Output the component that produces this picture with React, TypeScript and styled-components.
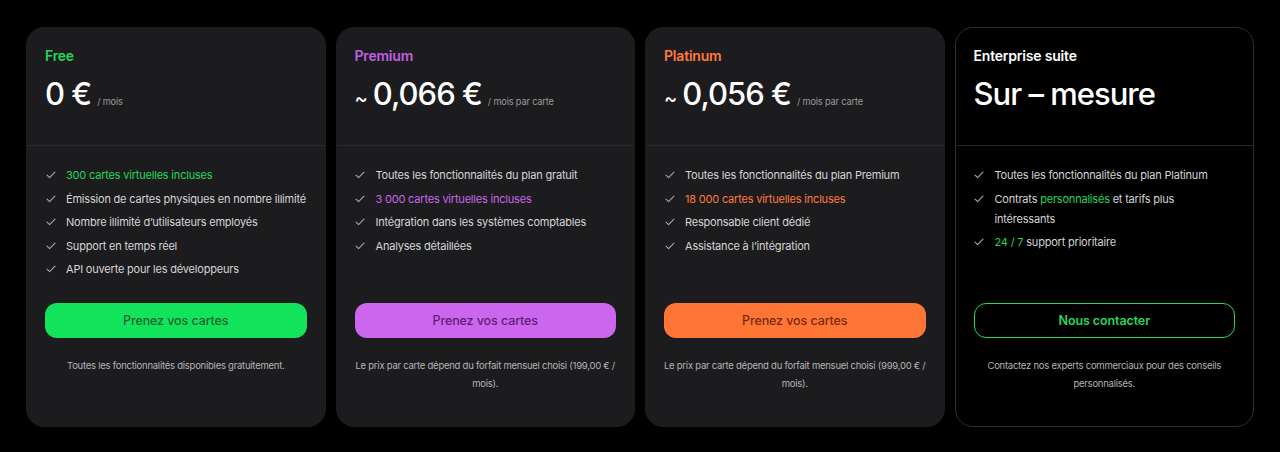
import React from "react";
import styled, { createGlobalStyle } from "styled-components";

const Global = createGlobalStyle`
  html, body { margin: 0; padding: 0; background: #000; }
  body { font-family: Inter, "Noto Sans", "Liberation Sans", sans-serif; -webkit-font-smoothing: antialiased; }
  * { box-sizing: border-box; }
`;

const Page = styled.div`
  width: 1228px;
  margin: 0 auto;
  padding: 27px 0 25px;
  display: grid;
  grid-template-columns: repeat(4, 1fr);
  gap: 10px;
`;

const Card = styled.div<{ $dark?: boolean }>`
  height: 400px;
  border-radius: 18px;
  background: ${(p) => (p.$dark ? "#000" : "#1c1c1e")};
  border: 1px solid ${(p) => (p.$dark ? "#2e2e30" : "#1c1c1e")};
  display: flex;
  flex-direction: column;
  overflow: hidden;
`;

const Header = styled.div`
  height: 118px;
  padding: 18px 18px 0;
  border-bottom: 1px solid #2a2a2c;
  display: flex;
  flex-direction: column;
  gap: 8px;
`;

const PlanName = styled.div<{ $color: string }>`
  font-size: 14px;
  line-height: 20px;
  font-weight: 600;
  letter-spacing: -0.2px;
  color: ${(p) => p.$color};
`;

const PriceRow = styled.div`
  display: flex;
  align-items: baseline;
  color: #fff;
  height: 40px;
`;

const Tilde = styled.span`
  font-size: 20px;
  font-weight: 500;
  margin-right: 5px;
`;

const Amount = styled.span`
  font-size: 31px;
  line-height: 40px;
  font-weight: 500;
  letter-spacing: -1px;
`;

const Per = styled.span`
  font-size: 9.2px;
  letter-spacing: -0.15px;
  color: #9a9a9c;
  margin-left: 6px;
`;

const Features = styled.ul`
  list-style: none;
  margin: 0;
  padding: 19px 18px 0;
  height: 157px;
  display: flex;
  flex-direction: column;
  gap: 3.5px;
`;

const Feature = styled.li`
  display: flex;
  align-items: flex-start;
  gap: 10px;
  font-size: 11px;
  letter-spacing: -0.2px;
  line-height: 20px;
  color: #d4d4d6;
`;

const CheckWrap = styled.span`
  flex: none;
  width: 11px;
  height: 20px;
  display: flex;
  align-items: center;
  justify-content: center;
`;

const Hl = styled.span<{ $color: string }>`
  color: ${(p) => p.$color};
`;

const Bottom = styled.div`
  padding: 0 18px;
  display: flex;
  flex-direction: column;
  gap: 18px;
`;

const Button = styled.button<{ $bg: string; $fg: string; $outline?: boolean }>`
  height: 35px;
  width: 100%;
  border-radius: 12px;
  border: ${(p) => (p.$outline ? `1px solid ${p.$fg}` : "none")};
  background: ${(p) => p.$bg};
  color: ${(p) => p.$fg};
  font-family: inherit;
  font-size: 12.5px;
  letter-spacing: -0.1px;
  font-weight: ${(p) => (p.$outline ? 600 : 500)};
  cursor: pointer;
`;

const Note = styled.p`
  margin: 1px -2px 0;
  font-size: 9.5px;
  letter-spacing: -0.25px;
  line-height: 18px;
  color: #b4b4b6;
  text-align: center;
`;

const Check = () => (
  <CheckWrap>
    <svg width="10" height="8" viewBox="0 0 10 8" fill="none">
      <path d="M1 4.2 L3.6 6.6 L9 1.2" stroke="#a8a8aa" strokeWidth="1.1" strokeLinecap="round" strokeLinejoin="round" />
    </svg>
  </CheckWrap>
);

type Plan = {
  name: string;
  nameColor: string;
  tilde?: boolean;
  amount: string;
  per?: string;
  features: React.ReactNode[];
  button: string;
  bg: string;
  fg: string;
  outline?: boolean;
  dark?: boolean;
  note: string;
};

const G = "#22d65a";
const P = "#c866ea";
const O = "#ff7a3d";

const plans: Plan[] = [
  {
    name: "Free",
    nameColor: G,
    amount: "0 €",
    per: "/ mois",
    features: [
      <Hl $color={G}>300 cartes virtuelles incluses</Hl>,
      "Émission de cartes physiques en nombre illimité",
      "Nombre illimité d’utilisateurs employés",
      "Support en temps réel",
      "API ouverte pour les développeurs",
    ],
    button: "Prenez vos cartes",
    bg: "#13e35b",
    fg: "#17652f",
    note: "Toutes les fonctionnalités disponibles gratuitement.",
  },
  {
    name: "Premium",
    nameColor: "#c25fe2",
    tilde: true,
    amount: "0,066 €",
    per: "/ mois par carte",
    features: [
      "Toutes les fonctionnalités du plan gratuit",
      <Hl $color={P}>3 000 cartes virtuelles incluses</Hl>,
      "Intégration dans les systèmes comptables",
      "Analyses détaillées",
    ],
    button: "Prenez vos cartes",
    bg: "#cc66ee",
    fg: "#5e1e78",
    note: "Le prix par carte dépend du forfait mensuel choisi (199,00 € / mois).",
  },
  {
    name: "Platinum",
    nameColor: O,
    tilde: true,
    amount: "0,056 €",
    per: "/ mois par carte",
    features: [
      "Toutes les fonctionnalités du plan Premium",
      <Hl $color={O}>18 000 cartes virtuelles incluses</Hl>,
      "Responsable client dédié",
      "Assistance à l’intégration",
    ],
    button: "Prenez vos cartes",
    bg: "#ff7535",
    fg: "#7a2a0c",
    note: "Le prix par carte dépend du forfait mensuel choisi (999,00 € / mois).",
  },
  {
    name: "Enterprise suite",
    nameColor: "#fff",
    amount: "Sur – mesure",
    features: [
      "Toutes les fonctionnalités du plan Platinum",
      <>
        Contrats <Hl $color={G}>personnalisés</Hl> et tarifs plus intéressants
      </>,
      <>
        <Hl $color={G}>24 / 7</Hl> support prioritaire
      </>,
    ],
    button: "Nous contacter",
    bg: "transparent",
    fg: "#25d65c",
    outline: true,
    dark: true,
    note: "Contactez nos experts commerciaux pour des conseils personnalisés.",
  },
];

export default function App() {
  return (
    <>
      <Global />
      <Page>
        {plans.map((p) => (
          <Card key={p.name} $dark={p.dark}>
            <Header>
              <PlanName $color={p.nameColor}>{p.name}</PlanName>
              <PriceRow>
                {p.tilde && <Tilde>~</Tilde>}
                <Amount>{p.amount}</Amount>
                {p.per && <Per>{p.per}</Per>}
              </PriceRow>
            </Header>
            <Features>
              {p.features.map((f, i) => (
                <Feature key={i}>
                  <Check />
                  <span>{f}</span>
                </Feature>
              ))}
            </Features>
            <Bottom>
              <Button $bg={p.bg} $fg={p.fg} $outline={p.outline}>
                {p.button}
              </Button>
              <Note>{p.note}</Note>
            </Bottom>
          </Card>
        ))}
      </Page>
    </>
  );
}
